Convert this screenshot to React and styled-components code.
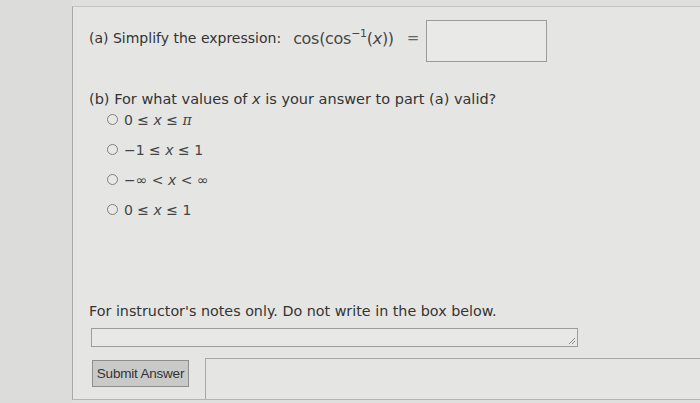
import React from "react";
import styled, { createGlobalStyle } from "styled-components";

const Global = createGlobalStyle`
  html, body { margin: 0; padding: 0; }
  body {
    width: 700px; height: 403px; overflow: hidden;
    background: #dfe0de;
    font-family: "DejaVu Sans", Verdana, sans-serif;
    color: #333;
  }
`;

const Page = styled.div`
  display: flex;
  width: 700px;
  height: 403px;
`;

const Margin = styled.div`
  width: 72px;
  flex: none;
  background: #dcdddb;
`;

const Panel = styled.div`
  flex: 1;
  margin-top: 6px;
  height: 394px;
  border-left: 1px solid #a9aaa8;
  border-top: 1px solid #c4c5c3;
  border-bottom: 1px solid #b5b6b4;
  background: #e5e6e4;
  padding: 9px 0 0 16px;
  box-sizing: border-box;
  display: flex;
  flex-direction: column;
`;

const PartA = styled.div`
  display: flex;
  align-items: center;
  font-size: 14px;
  height: 44px;
`;

const Math = styled.span`
  margin-left: 12px;
  font-size: 16px;
  color: #474747;
  letter-spacing: -0.3px;
`;

const Var = styled.i`
  font-style: italic;
`;

const Sup = styled.sup`
  font-size: 11px;
  vertical-align: 7px;
  line-height: 0;
`;

const Eq = styled.span`
  margin: 0 7px 0 13px;
  font-size: 15px;
  color: #666;
`;

const AnswerBox = styled.div`
  width: 121px;
  height: 42px;
  margin-top: 6px;
  border: 1px solid #9c9d9b;
  background: #e9eae8;
  box-sizing: border-box;
`;

const PartB = styled.div`
  margin-top: 31px;
  font-size: 14.5px;
  line-height: 17px;
`;

const Options = styled.div`
  display: flex;
  flex-direction: column;
  gap: 13px;
  margin-top: 3px;
  padding-left: 18px;
`;

const Option = styled.label`
  display: flex;
  align-items: center;
  gap: 6px;
  font-size: 14px;
  color: #444;
  height: 17px;
`;

const Radio = styled.span`
  width: 9px;
  height: 9px;
  border-radius: 50%;
  border: 1.5px solid #7f807e;
  background: #e8e9e7;
  flex: none;
`;

const Pi = styled.i`
  font-family: "DejaVu Serif", serif;
  font-style: italic;
`;

const Notes = styled.div`
  margin-top: 85px;
  font-size: 14.3px;
  line-height: 17px;
`;

const NotesBox = styled.div`
  margin-top: 8px;
  margin-left: 2px;
  width: 487px;
  height: 25px;
  border: 1px solid #9d9e9c;
  background: #e8e9e7;
  box-sizing: border-box;
  position: relative;
`;

const Grip = styled.svg`
  position: absolute;
  right: 1px;
  bottom: 1px;
`;

const Bottom = styled.div`
  display: flex;
  align-items: flex-start;
  gap: 16px;
  margin-top: 11px;
  margin-left: 3px;
`;

const Submit = styled.button`
  font-family: "Liberation Sans", Arial, sans-serif;
  font-size: 13.5px;
  white-space: nowrap;
  color: #333;
  background: #c9cac8;
  border: 1px solid #8e8f8d;
  padding: 0;
  height: 27px;
  width: 97px;
  margin-top: 2px;
  letter-spacing: -0.2px;
`;

const Feedback = styled.div`
  flex: 1;
  height: 40px;
  border-top: 1px solid #a8a9a7;
  border-left: 1px solid #a8a9a7;
`;

export default function App() {
  const options = [
    <>0 ≤ <Var>x</Var> ≤ <Pi>π</Pi></>,
    <>−1 ≤ <Var>x</Var> ≤ 1</>,
    <>−∞ &lt; <Var>x</Var> &lt; ∞</>,
    <>0 ≤ <Var>x</Var> ≤ 1</>,
  ];
  return (
    <>
      <Global />
      <Page>
        <Margin />
        <Panel>
          <PartA>
            <span>(a) Simplify the expression:</span>
            <Math>
              cos(cos<Sup>−1</Sup>(<Var>x</Var>))
            </Math>
            <Eq>=</Eq>
            <AnswerBox />
          </PartA>
          <PartB>
            (b) For what values of <Var>x</Var> is your answer to part (a) valid?
          </PartB>
          <Options>
            {options.map((o, i) => (
              <Option key={i}>
                <Radio />
                <span>{o}</span>
              </Option>
            ))}
          </Options>
          <Notes>For instructor's notes only. Do not write in the box below.</Notes>
          <NotesBox>
            <Grip width="9" height="9" viewBox="0 0 9 9">
              <path d="M8 2 L2 8 M8 5 L5 8" stroke="#8a8b89" strokeWidth="1" />
            </Grip>
          </NotesBox>
          <Bottom>
            <Submit>Submit Answer</Submit>
            <Feedback />
          </Bottom>
        </Panel>
      </Page>
    </>
  );
}
